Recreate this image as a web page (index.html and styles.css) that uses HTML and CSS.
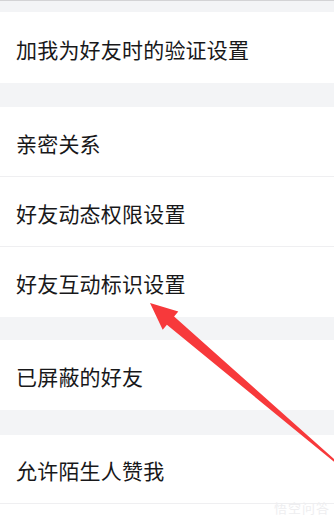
FILE: index.html
```html
<!DOCTYPE html>
<html lang="zh-CN">
<head>
<meta charset="utf-8">
<title>好友设置</title>
<link rel="stylesheet" href="styles.css">
</head>
<body>
<div class="page">
  <div class="topbar"></div>
  <div class="group">
    <div class="row row-first"><span class="label">加我为好友时的验证设置</span></div>
  </div>
  <div class="gap"></div>
  <div class="group">
    <div class="row sep"><span class="label">亲密关系</span></div>
    <div class="row sep"><span class="label">好友动态权限设置</span></div>
    <div class="row"><span class="label">好友互动标识设置</span></div>
  </div>
  <div class="gap gap-b"></div>
  <div class="group">
    <div class="row"><span class="label">已屏蔽的好友</span></div>
  </div>
  <div class="gap gap-c"></div>
  <div class="group">
    <div class="row row-short sep"><span class="label">允许陌生人赞我</span></div>
    <div class="row"></div>
  </div>
  <div class="watermark">悟空问答</div>
  <svg class="arrow" width="334" height="522" viewBox="0 0 334 522" xmlns="http://www.w3.org/2000/svg">
    <polygon points="150,303 178.3,311.5 174.1,316.4 345.8,469.5 344.8,470.7 166.9,324.8 162.7,329.7" fill="#f7393b"/>
  </svg>
</div>
</body>
</html>
```
FILE: styles.css
```css
html, body {
  margin: 0;
  padding: 0;
}
body {
  background: #f3f4f6;
  font-family: "Noto Sans CJK SC", "Noto Sans", sans-serif;
  color: #18181a;
}
.page {
  position: relative;
  width: 334px;
  height: 522px;
  overflow: hidden;
  display: flex;
  flex-direction: column;
}
.page > * {
  flex-shrink: 0;
}
.topbar {
  height: 11px;
  border-top: 1px solid #d3d3d5;
  background: #f3f4f6;
}
.group {
  background: #ffffff;
  display: flex;
  flex-direction: column;
}
.group > .row {
  flex-shrink: 0;
}
.gap {
  height: 24px;
}
.gap-b {
  height: 23px;
}
.gap-c {
  height: 25px;
}
.row {
  position: relative;
  height: 70px;
  display: flex;
  align-items: center;
  padding-left: 16px;
  padding-top: 3px;
  box-sizing: border-box;
}
.row-first {
  height: 71px;
}
.row-short {
  height: 69px;
}
.sep {
  border-bottom: 1px solid #efeff1;
}
.label {
  font-size: 21px;
  line-height: 1;
  letter-spacing: 0.2px;
}
.watermark {
  position: absolute;
  right: 4px;
  bottom: 5px;
  font-size: 13px;
  color: #eeeef0;
  letter-spacing: 1px;
}
.arrow {
  position: absolute;
  left: 0;
  top: 0;
  pointer-events: none;
}
```
